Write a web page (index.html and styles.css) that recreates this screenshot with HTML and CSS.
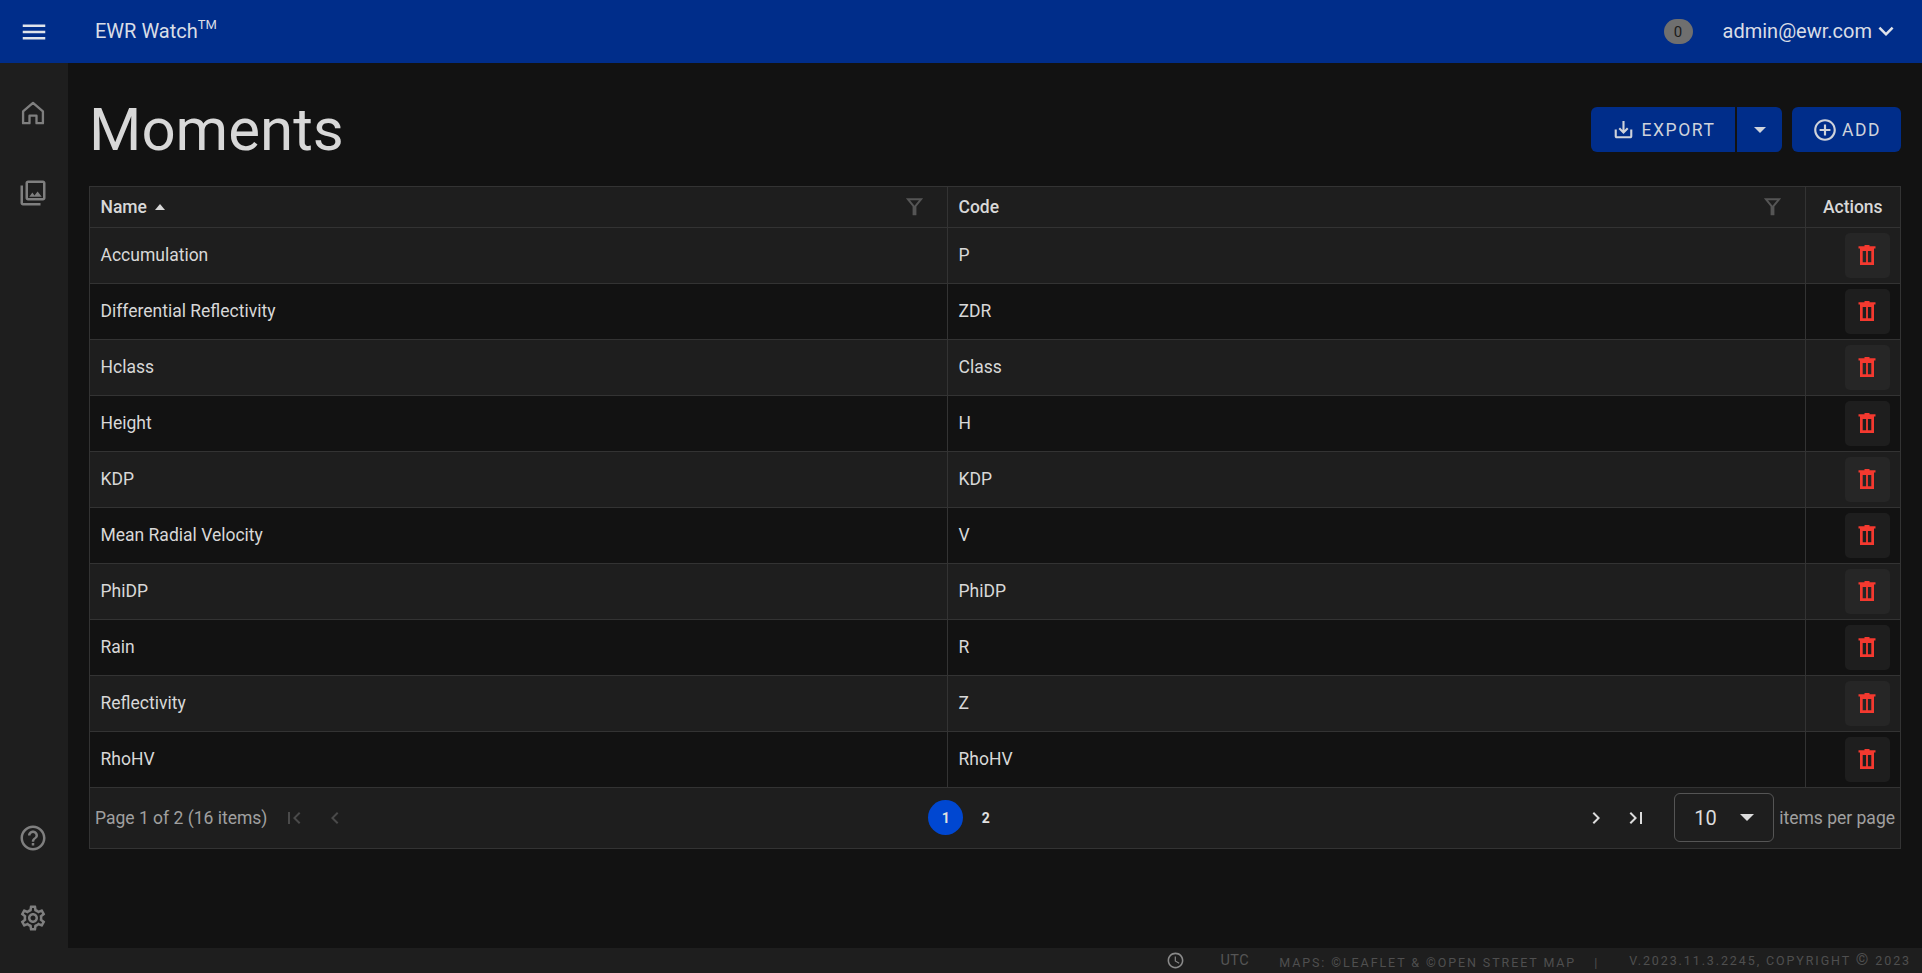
FILE: index.html
```html
<!DOCTYPE html>
<html lang="en">
<head>
<meta charset="utf-8">
<title>Moments</title>
<link rel="stylesheet" href="styles.css">
</head>
<body>
<header class="topbar">
  <svg class="menu-icon" viewBox="0 0 24 24"><path d="M3 18h18v-2H3v2zm0-5h18v-2H3v2zm0-7v2h18V6H3z"/></svg>
  <div class="brand">EWR Watch<sup>TM</sup></div>
  <div class="badge">0</div>
  <div class="user">admin@ewr.com</div>
  <svg class="chev" viewBox="0 0 24 24"><path d="M7.410 8.590L12 13.170l4.590-4.580L18 10l-6 6-6-6z"/></svg>
</header>
<div class="body-row">
  <nav class="sidebar">
    <svg class="nav-icon home-icon" viewBox="0 0 24 24"><path d="M12 3.300L20.500 10.700V20.700H15V14.300H9V20.700H3.500V10.700z"/></svg>
    <svg class="nav-icon" viewBox="0 0 24 24"><path d="M20 4v12H8V4h12m0-2H8c-1.100 0-2 .9-2 2v12c0 1.100.9 2 2 2h12c1.100 0 2-.9 2-2V4c0-1.100-.9-2-2-2zm-8.500 9.670l1.690 2.260 2.480-3.100L19 15H9zM2 6v14c0 1.100.9 2 2 2h14v-2H4V6H2z"/></svg>
    <div class="spacer"></div>
    <svg class="nav-icon" viewBox="0 0 24 24"><path d="M11 18h2v-2h-2v2zm1-16C6.480 2 2 6.480 2 12s4.480 10 10 10 10-4.480 10-10S17.520 2 12 2zm0 18c-4.410 0-8-3.590-8-8s3.590-8 8-8 8 3.590 8 8-3.590 8-8 8zm0-14c-2.210 0-4 1.790-4 4h2c0-1.100.9-2 2-2s2 .9 2 2c0 2-3 1.750-3 5h2c0-2.250 3-2.500 3-5 0-2.210-1.790-4-4-4z"/></svg>
    <svg class="nav-icon" viewBox="0 0 24 24"><path d="M19.430 12.980c.04-.32.07-.64.07-.98 0-.34-.03-.66-.07-.98l2.110-1.650c.19-.15.24-.42.12-.64l-2-3.460c-.09-.16-.26-.25-.44-.25-.06 0-.12.01-.17.03l-2.490 1c-.52-.4-1.080-.73-1.690-.98l-.38-2.650C14.460 2.180 14.250 2 14 2h-4c-.25 0-.46.18-.49.42l-.38 2.650c-.61.25-1.170.59-1.690.98l-2.490-1c-.06-.02-.12-.03-.18-.03-.17 0-.34.09-.43.25l-2 3.460c-.13.22-.07.49.12.64l2.110 1.650c-.04.32-.07.65-.07.98 0 .33.03.66.07.98l-2.110 1.650c-.19.15-.24.42-.12.64l2 3.460c.09.16.26.25.44.25.06 0 .12-.01.17-.03l2.490-1c.52.4 1.080.73 1.690.98l.38 2.650c.03.24.24.42.49.42h4c.25 0 .46-.18.49-.42l.38-2.650c.61-.25 1.170-.59 1.690-.98l2.490 1c.06.02.12.03.18.03.17 0 .34-.09.43-.25l2-3.460c.12-.22.07-.49-.12-.64l-2.110-1.650zm-1.980-1.710c.04.31.05.52.05.73 0 .21-.02.43-.05.73l-.14 1.130.89.7 1.080.84-.7 1.210-1.270-.51-1.040-.42-.9.68c-.43.32-.84.56-1.250.73l-1.060.43-.16 1.130-.2 1.350h-1.400l-.19-1.350-.16-1.130-1.060-.43c-.43-.18-.83-.41-1.230-.71l-.91-.7-1.060.43-1.270.51-.7-1.210 1.080-.84.89-.7-.14-1.130c-.03-.31-.05-.54-.05-.74s.02-.43.05-.73l.14-1.130-.89-.7-1.080-.84.7-1.210 1.270.51 1.040.42.9-.68c.43-.32.84-.56 1.250-.73l1.060-.43.16-1.130.2-1.350h1.390l.19 1.350.16 1.130 1.060.43c.43.18.83.41 1.230.71l.91.7 1.060-.43 1.270-.51.7 1.210-1.070.85-.89.7.14 1.130zM12 8c-2.210 0-4 1.790-4 4s1.790 4 4 4 4-1.790 4-4-1.790-4-4-4zm0 6c-1.100 0-2-.9-2-2s.9-2 2-2 2 .9 2 2-.9 2-2 2z"/></svg>
  </nav>
  <main class="main">
    <div class="title-row">
      <h1 class="title">Moments</h1>
      <div class="actions">
        <div class="split">
          <button class="btn btn-export"><svg class="btn-icon" viewBox="0 0 24 24"><path d="M19 12v7H5v-7H2.800v7c0 1.300.9 2.200 2.200 2.200h14c1.300 0 2.200-.9 2.200-2.200v-7H19zm-5.900.4l2.500-2.500 1.600 1.500-5.200 5.200-5.200-5.200 1.600-1.500 2.500 2.500V3h2.200z"/></svg>EXPORT</button>
          <button class="btn btn-drop"><span class="caret"></span></button>
        </div>
        <button class="btn btn-add"><svg class="btn-icon add-icon" viewBox="0 0 24 24"><path d="M13 7h-2v4H7v2h4v4h2v-4h4v-2h-4V7zm-1-5C6.480 2 2 6.480 2 12s4.480 10 10 10 10-4.480 10-10S17.520 2 12 2zm0 18c-4.410 0-8-3.590-8-8s3.590-8 8-8 8 3.590 8 8-3.590 8-8 8z"/></svg>ADD</button>
      </div>
    </div>
    <div class="grid">
      <table class="table">
        <colgroup><col class="col-a"><col class="col-b"><col class="col-c"></colgroup>
        <thead>
          <tr>
            <th><div class="th-in"><span>Name</span><span class="sort"></span><svg class="filter" viewBox="0 0 24 24"><path fill-rule="evenodd" d="M3 3.500h18l-7 8.500v9h-4v-9L3 3.500zm4.300 2L12 11.200l4.700-5.700H7.300z"/></svg></div></th>
            <th><div class="th-in"><span>Code</span><svg class="filter" viewBox="0 0 24 24"><path fill-rule="evenodd" d="M3 3.500h18l-7 8.500v9h-4v-9L3 3.500zm4.300 2L12 11.200l4.700-5.700H7.300z"/></svg></div></th>
            <th class="th-actions">Actions</th>
          </tr>
        </thead>
        <tbody>
          <tr><td>Accumulation</td><td>P</td><td class="td-act"><button class="del"><svg viewBox="0 0 24 24"><path fill-rule="evenodd" d="M9.500 2h5v1.200h6v2.300H19V22H5V5.500H3.500V3.200h6V2zM7.700 8v11.300h3.400V8H7.700zm5.200 0v11.300h3.400V8h-3.400z"/></svg></button></td></tr>
          <tr><td>Differential Reflectivity</td><td>ZDR</td><td class="td-act"><button class="del"><svg viewBox="0 0 24 24"><path fill-rule="evenodd" d="M9.500 2h5v1.200h6v2.300H19V22H5V5.500H3.500V3.200h6V2zM7.700 8v11.300h3.400V8H7.700zm5.200 0v11.300h3.400V8h-3.400z"/></svg></button></td></tr>
          <tr><td>Hclass</td><td>Class</td><td class="td-act"><button class="del"><svg viewBox="0 0 24 24"><path fill-rule="evenodd" d="M9.500 2h5v1.200h6v2.300H19V22H5V5.500H3.500V3.200h6V2zM7.700 8v11.300h3.400V8H7.700zm5.200 0v11.300h3.400V8h-3.400z"/></svg></button></td></tr>
          <tr><td>Height</td><td>H</td><td class="td-act"><button class="del"><svg viewBox="0 0 24 24"><path fill-rule="evenodd" d="M9.500 2h5v1.200h6v2.300H19V22H5V5.500H3.500V3.200h6V2zM7.700 8v11.300h3.400V8H7.700zm5.200 0v11.300h3.400V8h-3.400z"/></svg></button></td></tr>
          <tr><td>KDP</td><td>KDP</td><td class="td-act"><button class="del"><svg viewBox="0 0 24 24"><path fill-rule="evenodd" d="M9.500 2h5v1.200h6v2.300H19V22H5V5.500H3.500V3.200h6V2zM7.700 8v11.300h3.400V8H7.700zm5.200 0v11.300h3.400V8h-3.400z"/></svg></button></td></tr>
          <tr><td>Mean Radial Velocity</td><td>V</td><td class="td-act"><button class="del"><svg viewBox="0 0 24 24"><path fill-rule="evenodd" d="M9.500 2h5v1.200h6v2.300H19V22H5V5.500H3.500V3.200h6V2zM7.700 8v11.300h3.400V8H7.700zm5.200 0v11.300h3.400V8h-3.400z"/></svg></button></td></tr>
          <tr><td>PhiDP</td><td>PhiDP</td><td class="td-act"><button class="del"><svg viewBox="0 0 24 24"><path fill-rule="evenodd" d="M9.500 2h5v1.200h6v2.300H19V22H5V5.500H3.500V3.200h6V2zM7.700 8v11.300h3.400V8H7.700zm5.200 0v11.300h3.400V8h-3.400z"/></svg></button></td></tr>
          <tr><td>Rain</td><td>R</td><td class="td-act"><button class="del"><svg viewBox="0 0 24 24"><path fill-rule="evenodd" d="M9.500 2h5v1.200h6v2.300H19V22H5V5.500H3.500V3.200h6V2zM7.700 8v11.300h3.400V8H7.700zm5.200 0v11.300h3.400V8h-3.400z"/></svg></button></td></tr>
          <tr><td>Reflectivity</td><td>Z</td><td class="td-act"><button class="del"><svg viewBox="0 0 24 24"><path fill-rule="evenodd" d="M9.500 2h5v1.200h6v2.300H19V22H5V5.500H3.500V3.200h6V2zM7.700 8v11.300h3.400V8H7.700zm5.200 0v11.300h3.400V8h-3.400z"/></svg></button></td></tr>
          <tr><td>RhoHV</td><td>RhoHV</td><td class="td-act"><button class="del"><svg viewBox="0 0 24 24"><path fill-rule="evenodd" d="M9.500 2h5v1.200h6v2.300H19V22H5V5.500H3.500V3.200h6V2zM7.700 8v11.300h3.400V8H7.700zm5.200 0v11.300h3.400V8h-3.400z"/></svg></button></td></tr>
        </tbody>
      </table>
      <div class="pager">
        <div class="pager-left">
          <span class="page-info">Page 1 of 2 (16 items)</span>
          <svg class="pg-icon off" viewBox="0 0 24 24"><path d="M18.410 16.590L13.820 12l4.590-4.590L17 6l-6 6 6 6zM6 6h2v12H6z"/></svg>
          <svg class="pg-icon off" viewBox="0 0 24 24"><path d="M15.410 7.410L14 6l-6 6 6 6 1.410-1.410L10.830 12z"/></svg>
        </div>
        <div class="pager-mid">
          <span class="pg pg-on">1</span>
          <span class="pg">2</span>
        </div>
        <div class="pager-right">
          <svg class="pg-icon" viewBox="0 0 24 24"><path d="M10 6L8.590 7.410 13.170 12l-4.580 4.590L10 18l6-6z"/></svg>
          <svg class="pg-icon pg-last" viewBox="0 0 24 24"><path d="M5.590 7.410L10.180 12l-4.590 4.590L7 18l6-6-6-6zM16 6h2v12h-2z"/></svg>
          <div class="per-page"><span>10</span><span class="caret caret-lg"></span></div>
          <span class="page-info">items per page</span>
        </div>
      </div>
    </div>
  </main>
</div>
<footer class="footer">
  <svg class="clock" viewBox="0 0 24 24"><path d="M11.990 2C6.470 2 2 6.480 2 12s4.470 10 9.990 10C17.520 22 22 17.520 22 12S17.520 2 11.990 2zM12 20c-4.420 0-8-3.580-8-8s3.580-8 8-8 8 3.580 8 8-3.580 8-8 8zm.5-13H11v6l5.250 3.150.75-1.230-4.500-2.670z"/></svg>
  <span class="utc">UTC</span>
  <span class="maps">MAPS: ©LEAFLET &amp; ©OPEN STREET MAP</span>
  <span class="sep">|</span>
  <span class="ver">V.2023.11.3.2245, COPYRIGHT <span class="copy">©</span> 2023</span>
</footer>
</body>
</html>
```
FILE: styles.css
```css
* { box-sizing: border-box; }
html, body { height: 100%; }
body {
  margin: 0;
  display: flex;
  flex-direction: column;
  height: 973px;
  overflow: hidden;
  background: #121212;
  color: #dcdcdc;
  font-family: Roboto, "Liberation Sans", sans-serif;
  font-size: 16px;
}
.topbar {
  height: 63px;
  flex: none;
  display: flex;
  align-items: center;
  background: #002d8a;
  color: #d9dde6;
  padding: 0 24px 0 19px;
}
.menu-icon { width: 30px; height: 30px; fill: #dfe3ea; }
.brand { margin-left: 46px; font-size: 20px; margin-top: -1px; flex: 1; }
.brand sup { font-size: 13px; line-height: 0; vertical-align: 9px; }
.badge {
  width: 29px; height: 25px; margin-right: 30px;
  border-radius: 13px;
  background: #6f6f6f; color: #1b1b1b;
  font-size: 15px; display: flex; align-items: center; justify-content: center;
}
.user { font-size: 20px; margin-top: -1px; }
.chev { width: 30px; height: 30px; fill: #e0e3ea; margin: -1px -3px 0 -1px; }
.body-row { flex: 1; display: flex; min-height: 0; }
.sidebar {
  width: 68px; flex: none;
  background: #1e1e1e;
  display: flex; flex-direction: column; align-items: center;
  padding: 35px 0 15px;
  gap: 50px;
}
.sidebar .spacer { flex: 1; margin-top: -50px; }
.nav-icon { width: 30px; height: 30px; fill: #7f7f7f; margin-right: 3px; }
.home-icon { fill: none; stroke: #7f7f7f; stroke-width: 2; stroke-linejoin: round; width: 28px; height: 28px; margin-top: 1px; margin-bottom: 1px; }
.main { flex: 1; padding: 0 21px; min-width: 0; }
.title-row { display: flex; justify-content: space-between; align-items: flex-start; height: 123px; }
.title { margin: 32px 0 0 0; font-size: 60px; line-height: 70px; font-weight: 400; color: #d8d8d8; }
.actions { display: flex; gap: 10px; margin-top: 44px; }
.split { display: flex; gap: 2px; }
.btn {
  height: 45px; border: 0; background: #002d8a; color: #cfd3db;
  font-family: inherit; font-size: 17.500px; font-weight: 400; letter-spacing: 1.550px;
  display: flex; align-items: center; justify-content: center;
  border-radius: 6px; padding: 0;
}
.btn-export { width: 144px; border-radius: 6px 0 0 6px; }
.btn-drop { width: 45px; border-radius: 0 6px 6px 0; }
.btn-add { width: 109px; }
.btn-icon { width: 23px; height: 23px; fill: #cfd3db; margin-right: 7px; margin-left: 1px; }
.add-icon { width: 26px; height: 26px; margin-right: 4px; margin-left: 0; }
.caret {
  width: 0; height: 0; display: inline-block;
  border-left: 6px solid transparent; border-right: 6px solid transparent;
  border-top: 6px solid #cfd3db;
}
.grid { border: 1px solid #333; width: 1812px; }
.table { width: 100%; border-collapse: collapse; table-layout: fixed; }
.col-a { width: 857px; }
.col-b { width: 858px; }
.col-c { width: 95px; }
th, td { padding: 0 11px; border-left: 1px solid #333; border-bottom: 1px solid #333; text-align: left; font-size: 17.500px; color: #d8d8d8; font-weight: 400; }
th:first-child, td:first-child { border-left: 0; padding-left: 10.500px; }
th { height: 40px; background: #1e1e1e; font-weight: 500; }
td { height: 56px; }
tbody tr:nth-child(odd) td { background: #1e1e1e; }
tbody tr:nth-child(even) td { background: #121212; }
.th-in { display: flex; align-items: center; }
.sort { margin-left: 8px; width: 0; height: 0; border-left: 5.500px solid transparent; border-right: 5.500px solid transparent; border-bottom: 6px solid #d8d8d8; }
.filter { width: 23px; height: 23px; margin-left: auto; margin-right: 10px; fill: #555; }
.th-actions { text-align: center; padding: 0; }
.td-act { padding: 0; }
.del {
  display: flex; align-items: center; justify-content: center;
  width: 45px; height: 45px; margin-left: 39px;
  border: 0; border-radius: 5px; padding: 0; background: #1e1e1e;
}
tbody tr:nth-child(odd) .del { background: #262626; }
.del svg { width: 24px; height: 24px; fill: #f4392f; }
.pager {
  height: 60px; background: #1e1e1e;
  display: flex; justify-content: space-between; align-items: center;
  padding: 0 5px;
}
.pager-left { display: flex; align-items: center; }
.pager-right { display: flex; align-items: center; }
.page-info { font-size: 17.500px; color: #a0a0a0; }
.pg-icon { width: 24px; height: 24px; fill: #dcdcdc; }
.pg-icon.off { fill: #4a4a4a; }
.pager-left .pg-icon { margin-left: 17px; }
.pager-left .page-info + .pg-icon { margin-left: 15px; }
.pager-mid { display: flex; gap: 5px; align-items: center; }
.pg { width: 35px; height: 35px; border-radius: 50%; display: flex; align-items: center; justify-content: center; font-size: 14px; font-weight: 700; color: #e0e0e0; }
.pg-on { background: #0047d1; }
.pager-right .pg-icon { margin-right: 16px; }
.pager-right .pg-last { margin-right: 21px; }
.per-page {
  width: 100px; height: 49px; margin: 0 5px;
  border: 1px solid #555; border-radius: 6px;
  display: flex; align-items: center; justify-content: space-between;
  padding: 0 19px; font-size: 20px; color: #dcdcdc;
}
.caret-lg { border-left-width: 7px; border-right-width: 7px; border-top-width: 7px; border-top-color: #dcdcdc; }
.footer {
  height: 25px; flex: none; background: #1e1e1e;
  display: flex; align-items: center; justify-content: flex-end;
  padding-right: 11px; color: #4f4f4f; font-size: 12.500px; letter-spacing: 2px;
}
.clock { width: 19px; height: 19px; fill: #8a8a8a; margin-right: 35px; }
.utc { font-size: 14.500px; letter-spacing: .500px; margin-right: 30px; color: #555; }
.maps { margin-top: 3px; margin-right: 18px; letter-spacing: 1.900px; }
.sep { margin-top: 3px; margin-right: 30px; }
.ver { margin-top: -1px; letter-spacing: 1.900px; }
.copy { font-size: 16px; line-height: 1; }
```
